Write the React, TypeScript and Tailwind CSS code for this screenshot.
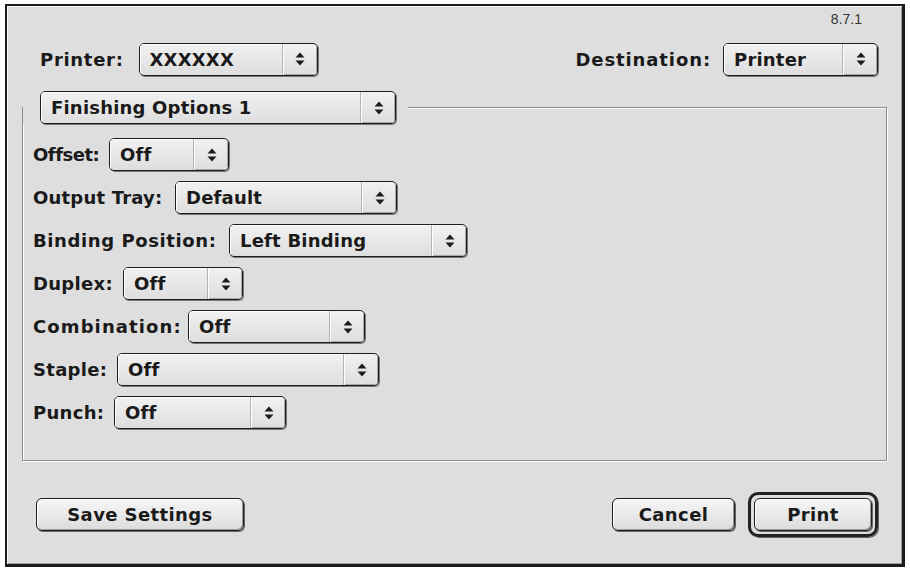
import React from "react";

const font = { fontFamily: '"DejaVu Sans", "Liberation Sans", sans-serif' };

function Arrows() {
  return (
    <svg width="12" height="16" viewBox="0 0 12 16" className="text-[#1c1c1c]">
      <polygon points="1.5,6.5 6,1.5 10.5,6.5" fill="currentColor" />
      <polygon points="1.5,9.5 6,14.5 10.5,9.5" fill="currentColor" />
    </svg>
  );
}

function Popup({ value, className }: { value: string; className: string }) {
  return (
    <div
      className={
        "flex h-[33px] shrink-0 rounded-[5px] border border-[#1e1e1e] bg-gradient-to-b from-[#f1f1f1] to-[#dedede] shadow-[1px_1px_0_#777] overflow-hidden " +
        className
      }
    >
      <div className="flex flex-1 items-center pl-[10px] text-[18px] font-bold tracking-[0.2px] text-[#1a1a1a] shadow-[inset_1px_1px_0_#fff]">
        {value}
      </div>
      <div className="flex w-[34px] items-center justify-center border-l border-white shadow-[-1px_0_0_#b4b4b4,inset_-1px_-1px_0_#a8a8a8]">
        <Arrows />
      </div>
    </div>
  );
}

function Button({ label, className }: { label: string; className: string }) {
  return (
    <div
      className={
        "flex h-[33px] items-center justify-center rounded-[6px] border border-[#1e1e1e] bg-gradient-to-b from-[#f6f6f6] to-[#dcdcdc] text-[18px] font-bold tracking-[0.4px] text-[#1a1a1a] shadow-[1px_1px_0_#666,inset_1px_1px_0_#fff,inset_-1px_-1px_0_#9c9c9c] " +
        className
      }
    >
      {label}
    </div>
  );
}

const rows = [
  { label: "Offset:", value: "Off", lw: "w-[68px] tracking-[-0.5px]", w: "w-[120px]" },
  { label: "Output Tray:", value: "Default", lw: "w-[134px] tracking-[0.2px]", w: "w-[222px]" },
  { label: "Binding Position:", value: "Left Binding", lw: "w-[188px] tracking-[0.6px]", w: "w-[238px]" },
  { label: "Duplex:", value: "Off", lw: "w-[82px] tracking-[0.3px]", w: "w-[120px]" },
  { label: "Combination:", value: "Off", lw: "w-[147px] tracking-[1.1px]", w: "w-[177px]" },
  { label: "Staple:", value: "Off", lw: "w-[76px] tracking-[0.3px]", w: "w-[262px]" },
  { label: "Punch:", value: "Off", lw: "w-[73px] tracking-[0.3px]", w: "w-[172px]" },
];

export default function App() {
  return (
    <div className="h-[573px] w-[910px] bg-white pl-[5px] pt-[4px]" style={font}>
      <div className="flex h-[563px] w-[900px] flex-col border-2 border-b-[3px] border-r-[3px] border-[#1c1c1c] bg-[#dedede] shadow-[inset_1px_1px_0_#fafafa,inset_-1px_-1px_0_#9a9a9a]">
        {/* version */}
        <div className="flex h-[36px] justify-end pr-[40px] pt-[5px]">
          <span className="text-[14px] leading-[16px] text-[#333]" style={{ fontFamily: '"Liberation Sans", Arial, sans-serif' }}>
            8.7.1
          </span>
        </div>

        {/* printer / destination */}
        <div className="flex h-[34px] items-center justify-between pl-[33px] pr-[24px]">
          <div className="flex items-center gap-[15px]">
            <span className="text-[18px] font-bold tracking-[0.7px] text-[#1a1a1a]">Printer:</span>
            <Popup value="XXXXXX" className="w-[179px]" />
          </div>
          <div className="flex items-center gap-[12px]">
            <span className="text-[18px] font-bold tracking-[0.9px] text-[#1a1a1a]">Destination:</span>
            <Popup value="Printer" className="w-[155px]" />
          </div>
        </div>

        {/* group box */}
        <div className="ml-[15px] mr-[15px] mt-[31px] border border-[#8e8e8e] pb-[31px] shadow-[1px_1px_0_#fbfbfb,inset_1px_1px_0_#fbfbfb]">
          <div className="-mt-[17px] flex w-fit bg-[#dedede] pl-[17px] pr-[12px]">
            <Popup value="Finishing Options 1" className="w-[356px]" />
          </div>
          <div className="mt-[14px] flex flex-col gap-[10px] pl-[10px]">
            {rows.map((r) => (
              <div key={r.label} className="flex h-[33px] items-center gap-[8px]">
                <span className={"shrink-0 whitespace-nowrap text-[18px] font-bold text-[#1a1a1a] " + r.lw}>
                  {r.label}
                </span>
                <Popup value={r.value} className={r.w} />
              </div>
            ))}
          </div>
        </div>

        {/* buttons */}
        <div className="mt-[30px] flex h-[46px] items-center pl-[29px] pr-[24px]">
          <Button label="Save Settings" className="w-[208px]" />
          <div className="flex-1" />
          <Button label="Cancel" className="w-[123px]" />
          <div className="ml-[13px] rounded-[10px] border-[3px] border-[#222] p-[3px] shadow-[1px_1px_0_#666]">
            <Button label="Print" className="w-[118px]" />
          </div>
        </div>
      </div>
    </div>
  );
}
